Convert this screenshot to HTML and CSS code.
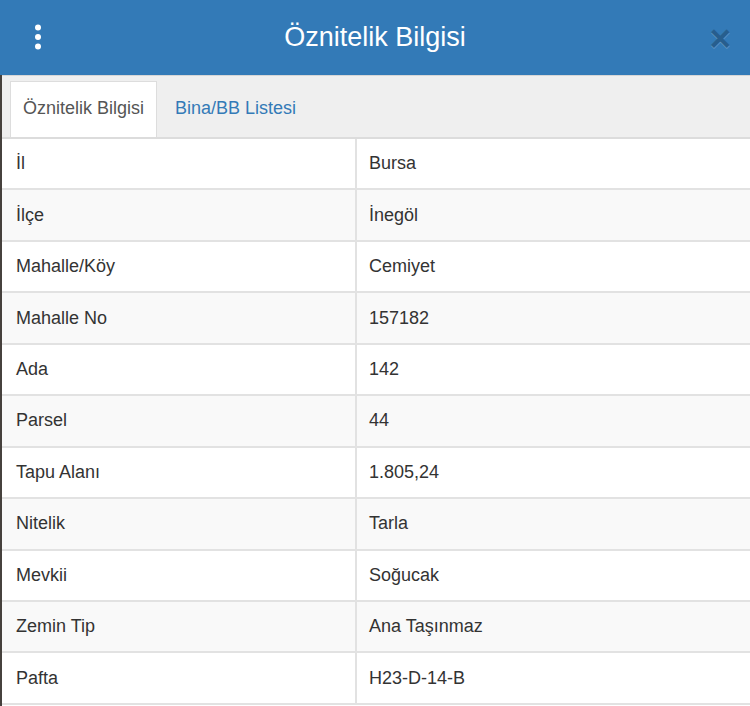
FILE: index.html
```html
<!DOCTYPE html>
<html lang="tr">
<head>
<meta charset="utf-8">
<title>Öznitelik Bilgisi</title>
<link rel="stylesheet" href="styles.css">
</head>
<body>
<div class="panel">
  <header class="panel-head">
    <span class="menu-btn">
      <svg width="8" height="26" viewBox="0 0 8 26"><circle cx="4" cy="3.5" r="3" fill="#fff"/><circle cx="4" cy="13" r="3" fill="#fff"/><circle cx="4" cy="22.5" r="3" fill="#fff"/></svg>
    </span>
    <h1 class="panel-title">Öznitelik Bilgisi</h1>
    <span class="close-btn">×</span>
  </header>
  <nav class="tabs">
    <span class="tab active">Öznitelik Bilgisi</span>
    <span class="tab">Bina/BB Listesi</span>
  </nav>
  <div class="attr-table">
    <div class="row"><div class="cell key">İl</div><div class="cell val">Bursa</div></div>
    <div class="row"><div class="cell key">İlçe</div><div class="cell val">İnegöl</div></div>
    <div class="row"><div class="cell key">Mahalle/Köy</div><div class="cell val">Cemiyet</div></div>
    <div class="row"><div class="cell key">Mahalle No</div><div class="cell val">157182</div></div>
    <div class="row"><div class="cell key">Ada</div><div class="cell val">142</div></div>
    <div class="row"><div class="cell key">Parsel</div><div class="cell val">44</div></div>
    <div class="row"><div class="cell key">Tapu Alanı</div><div class="cell val">1.805,24</div></div>
    <div class="row"><div class="cell key">Nitelik</div><div class="cell val">Tarla</div></div>
    <div class="row"><div class="cell key">Mevkii</div><div class="cell val">Soğucak</div></div>
    <div class="row"><div class="cell key">Zemin Tip</div><div class="cell val">Ana Taşınmaz</div></div>
    <div class="row"><div class="cell key">Pafta</div><div class="cell val">H23-D-14-B</div></div>
  </div>
</div>
</body>
</html>
```
FILE: styles.css
```css
html, body {
  margin: 0;
  padding: 0;
}
body {
  width: 750px;
  height: 706px;
  overflow: hidden;
  background: linear-gradient(to bottom, #337ab7 0, #337ab7 35px, #46413d 35px);
  font-family: "Liberation Sans", Arial, sans-serif;
  color: #333;
}
.panel {
  margin-left: 2px;
  background: #fff;
  height: 706px;
}
.panel-head {
  height: 75px;
  background: #337ab7;
  margin-left: -2px;
  display: flex;
  align-items: center;
  justify-content: space-between;
  padding: 0 19px 0 34px;
  box-sizing: border-box;
  position: relative;
}
.menu-btn {
  display: flex;
  width: 8px;
  margin-top: -1px;
}
.panel-title {
  position: absolute;
  left: 0;
  right: 0;
  top: 0;
  margin: 0;
  line-height: 75px;
  text-align: center;
  font-size: 27px;
  font-weight: normal;
  color: #fff;
  pointer-events: none;
}
.close-btn {
  font-size: 37px;
  font-weight: bold;
  line-height: 1;
  color: #000;
  opacity: 0.22;
  text-shadow: 0 1px 0 #fff;
  margin-top: 1px;
}
.tabs {
  display: flex;
  gap: 5px;
  align-items: flex-end;
  background: #efefef;
  border-top: 1px solid #d6d6d6;
  border-bottom: 2px solid #dcdcdc;
  padding: 5px 0 0 8px;
  height: 64px;
  box-sizing: border-box;
}
.tab {
  font-size: 18px;
  line-height: 20px;
  padding: 16px 12px 19px 12px;
  color: #337ab7;
  border: 1px solid transparent;
  border-bottom: 0;
}
.tab.active {
  background: #fff;
  color: #555;
  border-color: #dddddd;
}
.attr-table {
  display: flex;
  flex-direction: column;
}
.row {
  display: grid;
  grid-template-columns: 355px 1fr;
  height: 51.45px;
  box-sizing: border-box;
  border-bottom: 2px solid #e2e2e2;
}
.row:nth-child(even) {
  background: #f9f9f9;
}
.cell {
  display: flex;
  align-items: center;
  font-size: 18px;
  color: #333;
}
.key {
  padding-left: 14px;
  border-right: 2px solid #e2e2e2;
}
.val {
  padding-left: 12px;
}
```
